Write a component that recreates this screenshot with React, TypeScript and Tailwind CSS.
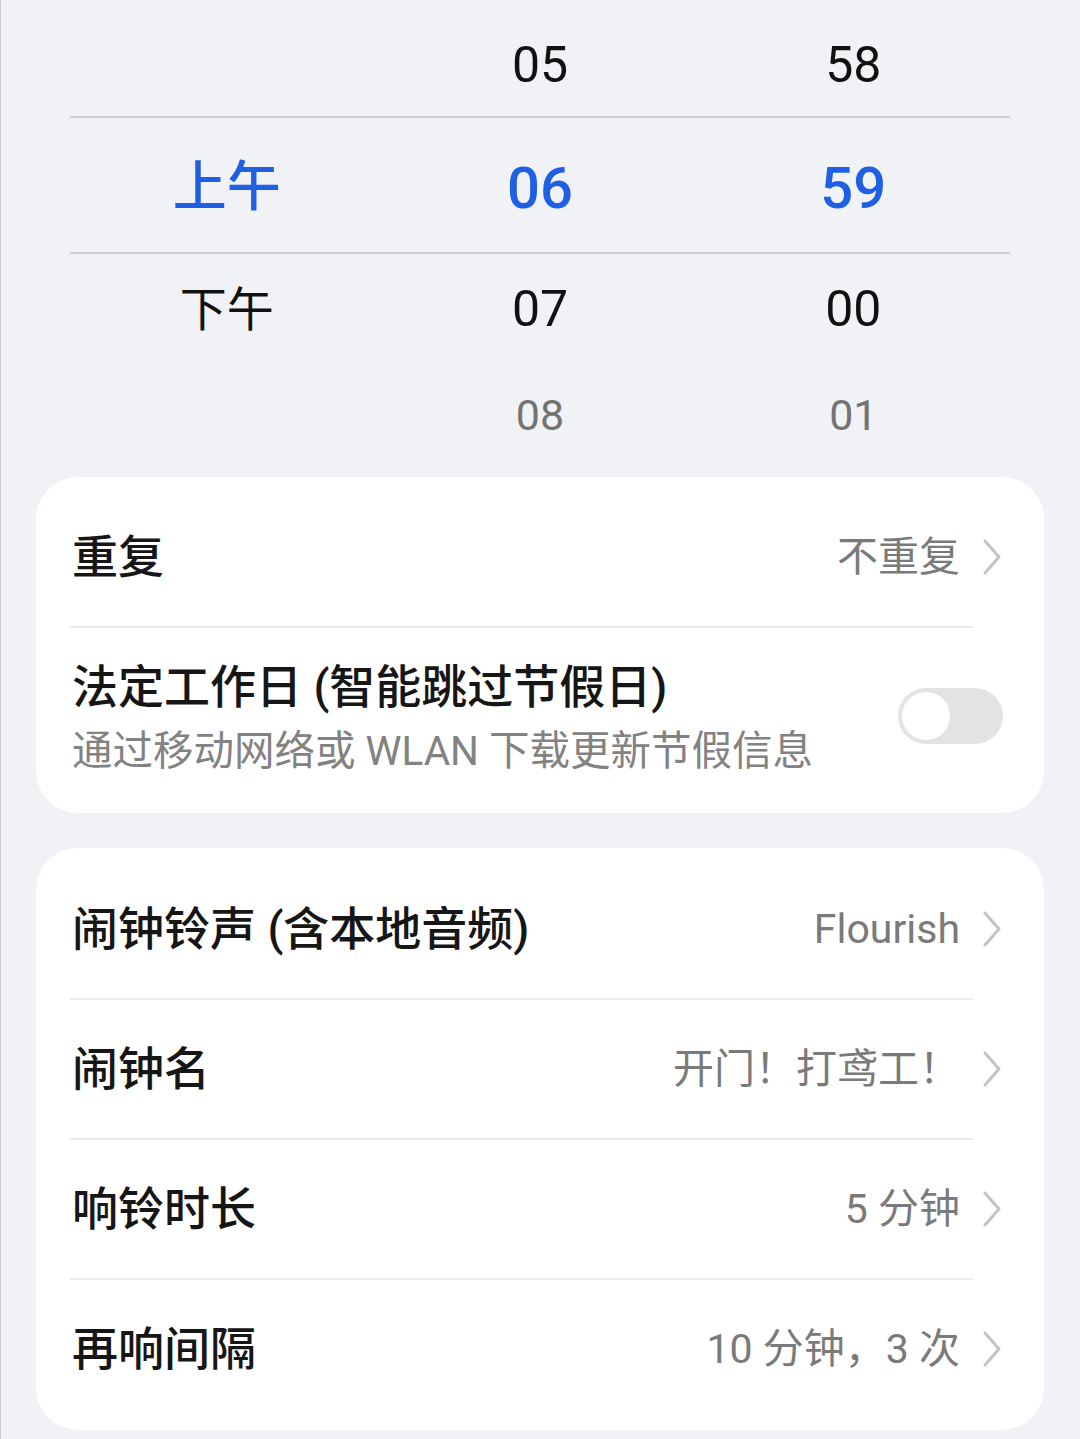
import React from "react";

const FONT = "font-['Roboto','Noto_Sans_CJK_SC',sans-serif]";

function Chevron() {
  return (
    <svg width="20" height="38" viewBox="0 0 20 38" fill="none" className="shrink-0">
      <polyline points="3,3 17,19 3,35" stroke="#c4c4c4" strokeWidth="3" strokeLinecap="round" strokeLinejoin="round" />
    </svg>
  );
}

function Divider() {
  return <div className="ml-[34px] mr-[71px] h-[2px] bg-[#ebebeb]" />;
}

function NavRow({ title, value }: { title: string; value: string }) {
  return (
    <div className="flex h-[138px] items-center pl-[36px] pr-[42px]">
      <div className="flex-1 text-[46px] font-medium leading-none text-[#161616]">{title}</div>
      <div className="text-[41px] leading-none text-[#7a7a7a]">{value}</div>
      <div className="ml-[22px]">
        <Chevron />
      </div>
    </div>
  );
}

export default function App() {
  return (
    <div className={`min-h-[1439px] w-[1080px] border-l border-[#c9cacc] bg-[#f1f2f5] ${FONT}`}>
      {/* time picker */}
      <div className="ml-[69px] mr-[70px]">
        <div className="grid h-[116px] grid-cols-3 items-center pt-[14px] text-[50px] leading-none text-[#111]">
          <span />
          <span className="text-center">05</span>
          <span className="text-center">58</span>
        </div>
        <div className="grid h-[138px] grid-cols-3 items-center border-y-2 border-[#cdcfd2] pt-[6px] text-[#1e5fe3]">
          <span className="text-center text-[54px] font-medium leading-none">上午</span>
          <span className="text-center text-[58px] font-medium leading-none">06</span>
          <span className="text-center text-[58px] font-medium leading-none">59</span>
        </div>
        <div className="grid h-[110px] grid-cols-3 items-center text-[#111]">
          <span className="text-center text-[47px] leading-none">下午</span>
          <span className="text-center text-[50px] leading-none">07</span>
          <span className="text-center text-[50px] leading-none">00</span>
        </div>
        <div className="grid h-[102px] grid-cols-3 items-center text-[43px] leading-none text-[#737373]">
          <span />
          <span className="text-center">08</span>
          <span className="text-center">01</span>
        </div>
      </div>

      {/* repeat card */}
      <div className="ml-[35px] mr-[36px] mt-[11px] rounded-[42px] bg-white pb-[10px] pt-[11px]">
        <NavRow title="重复" value="不重复" />
        <Divider />
        <div className="flex h-[175px] items-center pl-[36px] pr-[41px]">
          <div className="flex flex-1 flex-col gap-[21px] pt-[4px]">
            <div className="text-[46px] font-medium leading-none text-[#161616]">法定工作日 (智能跳过节假日)</div>
            <div className="text-[40.5px] leading-none text-[#828282]">通过移动网络或 WLAN 下载更新节假信息</div>
          </div>
          <div className="flex h-[56px] w-[105px] items-center rounded-full bg-[#e3e3e3] px-[4px]">
            <div className="h-[48px] w-[48px] rounded-full bg-white" />
          </div>
        </div>
      </div>

      {/* alarm card */}
      <div className="ml-[35px] mr-[36px] mt-[35px] rounded-[42px] bg-white pb-[12px] pt-[12px]">
        <NavRow title="闹钟铃声 (含本地音频)" value="Flourish" />
        <Divider />
        <NavRow title="闹钟名" value="开门！打鸢工！" />
        <Divider />
        <NavRow title="响铃时长" value="5 分钟" />
        <Divider />
        <NavRow title="再响间隔" value="10 分钟，3 次" />
      </div>
    </div>
  );
}
